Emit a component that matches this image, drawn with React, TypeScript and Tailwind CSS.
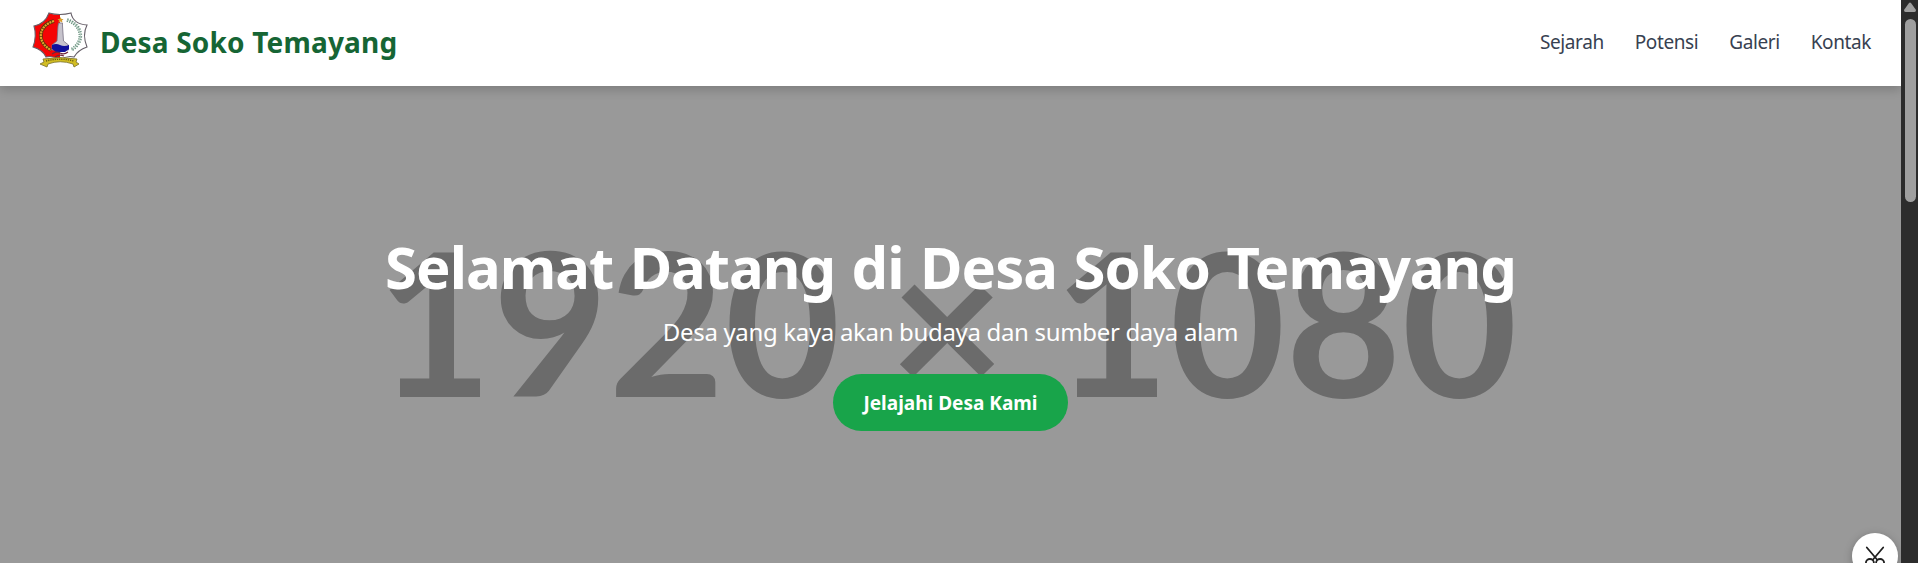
const links = ["Sejarah", "Potensi", "Galeri", "Kontak"];

function Crest() {
  return (
    <svg viewBox="0 0 56 56" className="h-14 w-14 shrink-0">
      <path d="M17 1 Q28 4 39 1 Q41 12 55 13 Q50 23 55 35 Q46 38 42 45 Q35 43 28 48 Q21 43 14 45 Q11 38 1 35 Q5 24 2 14 Q13 12 17 1Z" fill="#fff" />
      <path d="M28 2.500 Q22 3 17 1 Q13 12 2 14 Q5 24 1 35 Q11 38 14 45 Q21 43 28 48Z" fill="#f50505" />
      <path d="M17 1 Q28 4 39 1 Q41 12 55 13 Q50 23 55 35 Q46 38 42 45 Q35 43 28 48 Q21 43 14 45 Q11 38 1 35 Q5 24 2 14 Q13 12 17 1Z" fill="none" stroke="#665f68" strokeWidth="1.100" />
      <path d="M22 9 C5 14 5 31 19 38" fill="none" stroke="#5c3408" strokeWidth="3.600" />
      <path d="M22 9 C5 14 5 31 19 38" fill="none" stroke="#dfa52d" strokeWidth="2.200" strokeDasharray="2 .8" />
      <path d="M35 8 C51 13 53 30 39 38" fill="none" stroke="#68917e" strokeWidth="3.600" strokeDasharray="1.300 1.200" />
      <path d="M35 8 C51 13 53 30 39 38" fill="none" stroke="#b8d0c4" strokeWidth="1" />
      <path d="M26.500 11h4v3l1 15 5 4v5H20v-5l5-4 1-15z" fill="#c6c3cc" stroke="#777083" strokeWidth=".8" />
      <path d="m28.500 5 1 2 2 0-1.500 1.500.5 2-2-1-2 1 .5-2L25.500 7h2z" fill="#d79b2a" />
      <path d="M20 33q4-2 8 0t9 0v4l-4 3h-9l-4-3z" fill="#10109b" />
      <path d="M20 42q4-3 8-1t8-1M23 45q4-3 9-1" fill="none" stroke="#6f273d" strokeWidth="1.200" />
      <path d="M11 47Q28 44 45 47L44 50L47 52L42 55L41 52Q28 47.500 16 52L15 55L8 52L12 50Z" fill="#d2bd22" stroke="#79702b" strokeWidth=".8" />
      <path d="M14 49q14-3.500 28 0" fill="none" stroke="#5d5316" strokeWidth="1.300" strokeDasharray="1.200 1" />
    </svg>
  );
}

function Scissors() {
  return (
    <svg viewBox="0 0 24 24" className="h-6 w-6" fill="none" stroke="#1f1f1f" strokeWidth="1.800" strokeLinecap="round">
      <path d="M3.800 3.500 14 15.500M20.200 3.500 10 15.500" />
      <circle cx="6.900" cy="19" r="4" />
      <circle cx="17.100" cy="19" r="4" />
    </svg>
  );
}

export default function App() {
  return (
    <div className="flex h-[563px] w-full overflow-hidden bg-[#999999] font-['Noto_Sans',sans-serif]">
      <div className="relative flex min-w-0 flex-1 flex-col overflow-hidden">
        <header className="relative z-10 flex h-[86px] shrink-0 items-center justify-between bg-white pr-[30px] pl-8 shadow-[0_4px_10px_rgba(0,0,0,0.18)]">
          <div className="flex items-center gap-3 pb-1.5">
            <Crest />
            <span className="pt-1 text-[28px] leading-10 font-bold tracking-[0.18px] whitespace-nowrap text-[#166534]">Desa Soko Temayang</span>
          </div>
          <nav className="flex gap-[31px] pb-0.5 text-[19px] leading-7 tracking-[-0.4px] text-[#374151]">
            {links.map((link) => (
              <a key={link} href="#">{link}</a>
            ))}
          </nav>
        </header>
        <main className="relative flex flex-1 flex-col items-center">
          <div className="absolute inset-x-0 top-[114px] pr-[7px] text-center font-['Lato',sans-serif] text-[200px] leading-[240px] font-bold whitespace-nowrap text-[#6b6b6b]">1920 × 1080</div>
          <h1 className="relative mt-[151px] text-[58px] leading-[60px] font-bold tracking-[-1px] [word-spacing:2.4px] whitespace-nowrap text-white">Selamat Datang di Desa Soko Temayang</h1>
          <p className="relative mt-[19px] text-2xl leading-8 tracking-[-0.33px] whitespace-nowrap text-white">Desa yang kaya akan budaya dan sumber daya alam</p>
          <a href="#" className="relative mt-[26px] flex h-[57px] w-[235px] shrink-0 items-center justify-center rounded-full bg-[#18a44a] pt-0.5 text-[19px] font-bold whitespace-nowrap text-white">Jelajahi Desa Kami</a>
        </main>
        <button className="absolute top-[533px] left-[1852px] z-20 flex h-[46px] w-[46px] items-center justify-center rounded-full bg-white shadow-[0_2px_8px_rgba(0,0,0,0.25)]">
          <Scissors />
        </button>
      </div>
      <aside className="flex w-[17px] shrink-0 flex-col items-center bg-[#2c2c2c] pt-0.5 pl-px">
        <svg viewBox="0 0 12 10" className="h-2.5 w-3">
          <path d="M5 1Q6 0 7 1L12 8Q12 10 10.500 10H1.500Q0 10 0 8Z" fill="#9f9f9f" />
        </svg>
        <div className="mt-[7px] h-[183px] w-[11px] rounded-full bg-[#9f9f9f]" />
      </aside>
    </div>
  );
}
